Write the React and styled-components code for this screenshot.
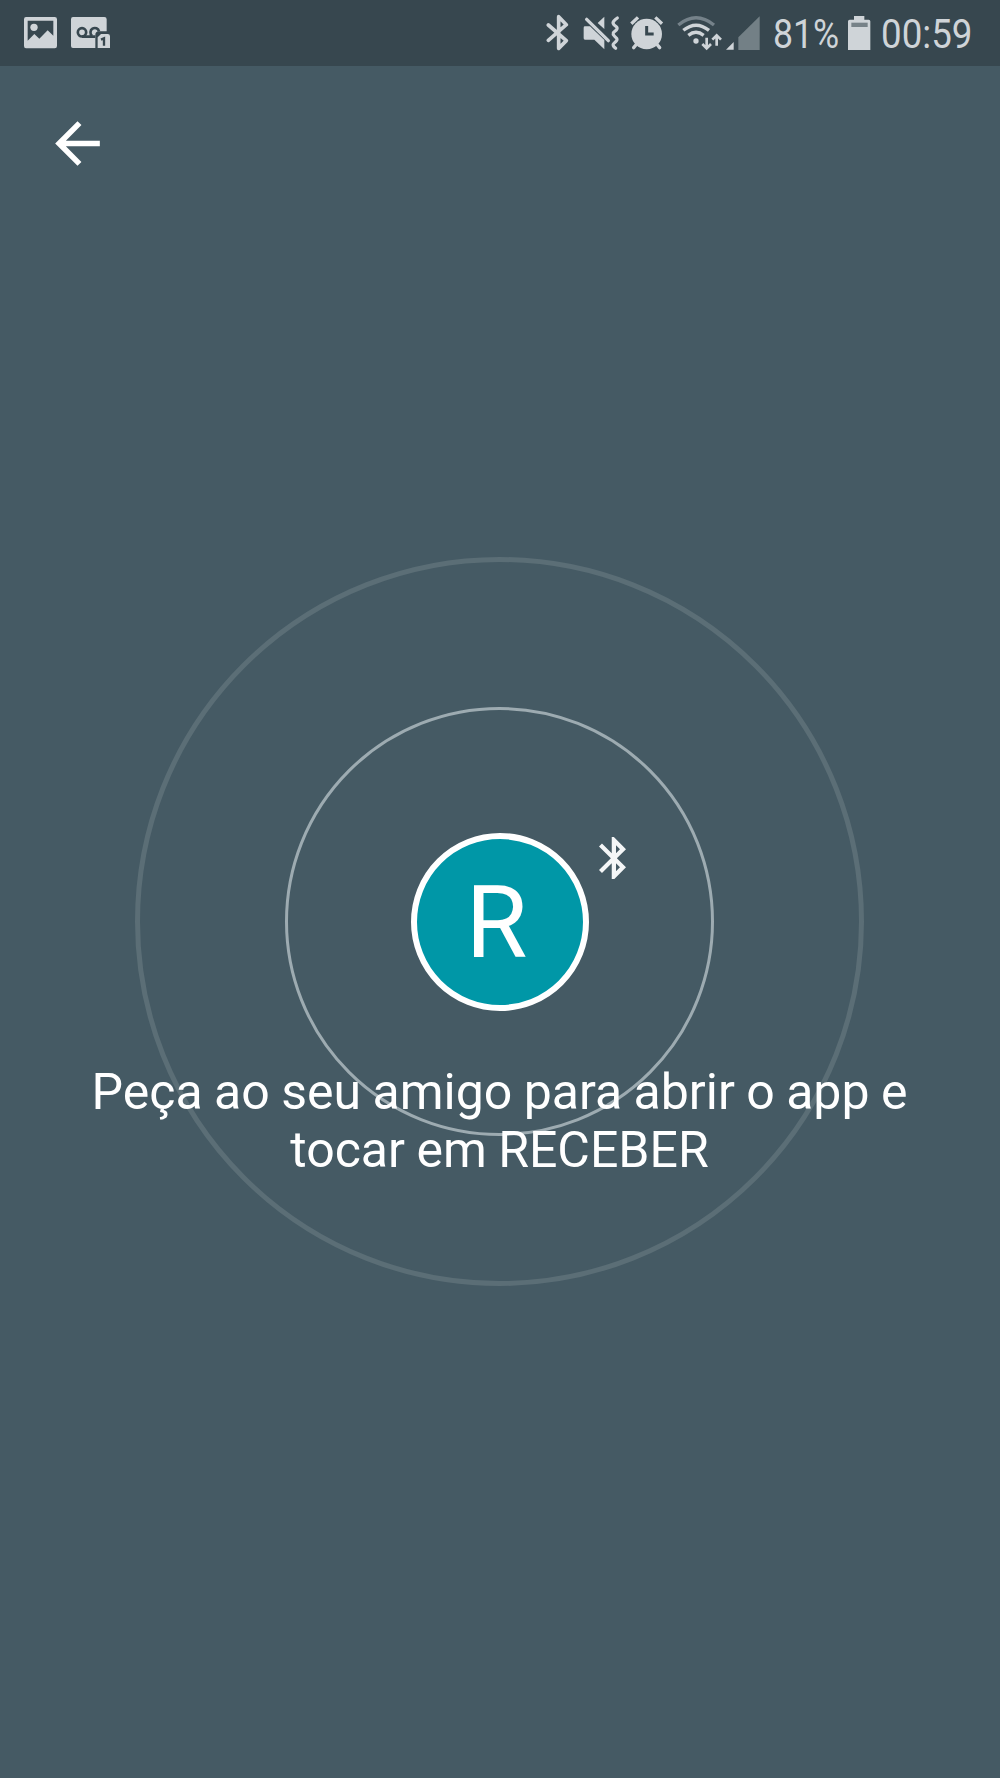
import React from "react";
import styled, { createGlobalStyle } from "styled-components";

const GlobalStyle = createGlobalStyle`
  * { box-sizing: border-box; }
  body { margin: 0; background: #455a64; }
`;

const Screen = styled.div`
  display: flex;
  flex-direction: column;
  width: 1000px;
  height: 1778px;
  overflow: hidden;
  background: #455a64;
  color: #fff;
  font-family: Roboto, "Liberation Sans", sans-serif;
`;

const StatusBar = styled.header`
  display: flex;
  justify-content: space-between;
  height: 66px;
  padding: 0 29px 0 24px;
  background: #37474f;
  color: #cfd4d8;
`;

const StatusGroup = styled.div`
  display: flex;
  align-items: flex-start;
`;

const Glyph = styled.svg`
  display: block;
  flex: none;
  width: ${(p) => p.$w}px;
  height: 66px;
  margin-left: ${(p) => p.$before || 0}px;
`;

const StatusText = styled.div`
  flex: none;
  width: ${(p) => p.$w}px;
  margin-left: ${(p) => p.$before || 0}px;
  padding-top: 10px;
  font-size: 41.5px;
  line-height: 48px;
  white-space: nowrap;
`;

const Condensed = styled.span`
  display: inline-block;
  transform: scaleX(${(p) => p.$scale});
  transform-origin: left center;
`;

const AppBar = styled.nav`
  flex: none;
  height: 156px;
  padding: 44px 0 0 44px;
`;

const BackButton = styled.button`
  display: block;
  padding: 0;
  border: 0;
  background: none;
  color: #fff;
`;

const Stage = styled.main`
  display: grid;
  justify-content: center;
  align-content: start;
  padding: 335px 1px 0 0;
`;

const Ring = styled.div`
  grid-area: 1 / 1;
  place-self: center;
  width: ${(p) => p.$size}px;
  height: ${(p) => p.$size}px;
  border: ${(p) => p.$line}px solid ${(p) => p.$color};
  border-radius: 50%;
`;

const Avatar = styled.div`
  grid-area: 1 / 1;
  place-self: center;
  display: flex;
  align-items: center;
  justify-content: center;
  width: 178px;
  height: 178px;
  padding: 2px 6px 0 0;
  border: 6px solid #fff;
  border-radius: 50%;
  background: #0097a7;
  font-size: 100px;
  line-height: 1;
`;

const BluetoothMark = styled.svg`
  grid-area: 1 / 1;
  place-self: start;
  width: 27px;
  height: 42.5px;
  margin: 279.7px 0 0 464px;
`;

const Message = styled.p`
  grid-area: 1 / 1;
  place-self: start center;
  width: 830px;
  margin: 506px -50px 0;
  font-size: 50px;
  line-height: 58px;
  word-spacing: -1px;
  text-align: center;
`;

const StatusIcon = ({ x, w, before, children }) => (
  <Glyph $w={w} $before={before} viewBox={`${x} 0 ${w * 3} 198`} fill="none" stroke="currentColor" aria-hidden="true">
    {children}
  </Glyph>
);

const PictureIcon = () => (
  <StatusIcon x={72} w={33}>
    <path fill="currentColor" stroke="none" fillRule="evenodd" d="M78 51H164Q171 51 171 58V138Q171 145 164 145H78Q72 145 72 138V58Q72 51 78 51ZM83 62V122L103 102L118 116L143 91L160 107V62Z" />
    <circle cx="102" cy="82" r="11" fill="currentColor" stroke="none" />
  </StatusIcon>
);

const VoicemailIcon = () => (
  <StatusIcon x={213} w={40} before={14}>
    <path fill="currentColor" stroke="none" d="M219 51H313Q320 51 320 58V94H297Q286 94 286 105V144H219Q213 144 213 138V58Q213 51 219 51Z" />
    <g stroke="#37474f" strokeWidth="8">
      <circle cx="246" cy="97" r="12.5" />
      <path d="M286 110H246M276 107A13 13 0 1 1 297 94" />
    </g>
    <path fill="currentColor" stroke="none" d="M303 102H323Q330 102 330 109V144H293V112Z" />
    <path stroke="#37474f" strokeWidth="7" d="M303 119L312 115V137" />
  </StatusIcon>
);

const BluetoothIcon = () => (
  <StatusIcon x={48} w={24}>
    <path strokeWidth="11" strokeLinecap="round" strokeLinejoin="round" d="M55 75L109 122L86 145V50L109 74L55 121" />
  </StatusIcon>
);

const MutedIcon = () => (
  <StatusIcon x={160} w={37} before={13}>
    <path fill="currentColor" stroke="none" d="M166 79H181L224 120V148L194 119H166Q162 119 162 115V83Q162 79 166 79ZM204 69L224 50V87Z" />
    <path strokeWidth="10" strokeLinecap="round" d="M171 58L236 122" />
    <path strokeWidth="9.5" strokeLinecap="round" strokeLinejoin="round" d="M263 54Q251 62 250 68Q250 73 261 81Q264 85 260 90L251 98Q249 103 254 108L261 115Q264 120 258 125L251 132Q248 137 258 145" />
  </StatusIcon>
);

const AlarmIcon = () => (
  <StatusIcon x={300} w={34} before={10}>
    <circle cx="350" cy="102" r="46" fill="currentColor" stroke="none" />
    <path strokeWidth="10" d="M304 71L324 52M376 52L396 71" />
    <path strokeWidth="10" strokeLinecap="round" d="M320 132L311 143M380 132L389 143" />
    <path stroke="#37474f" strokeWidth="9" d="M350 78V102H371" />
  </StatusIcon>
);

const WifiIcon = () => (
  <StatusIcon x={439} w={46} before={12.3}>
    <path stroke="#75828a" strokeWidth="10" d="M443 75Q496 32 550 75" />
    <path strokeWidth="10" d="M458 91Q496 60 535 91M473 106Q496 88 519 106" />
    <circle cx="496" cy="123" r="8" fill="currentColor" stroke="none" />
    <path strokeWidth="8" d="M528 113V144M515 132L528 145L541 132M558 137V107M545 119L558 106L571 119" />
  </StatusIcon>
);

const SignalIcon = () => (
  <StatusIcon x={589} w={34} before={3.5}>
    <path fill="currentColor" stroke="none" d="M589 149L612 126V149Z" />
    <path fill="#738086" stroke="none" d="M690 49V150H626V112Z" />
  </StatusIcon>
);

const BatteryIcon = () => (
  <StatusIcon x={263} w={23} before={9.5}>
    <path fill="currentColor" stroke="none" d="M281 48H312V59H325Q330 59 330 64V150H263V64Q263 59 268 59H281Z" />
    <path fill="#778288" stroke="none" d="M273 68H322V81H273Z" />
  </StatusIcon>
);

export default function App() {
  return (
    <Screen>
      <GlobalStyle />
      <StatusBar>
        <StatusGroup>
          <PictureIcon />
          <VoicemailIcon />
        </StatusGroup>
        <StatusGroup>
          <BluetoothIcon />
          <MutedIcon />
          <AlarmIcon />
          <WifiIcon />
          <SignalIcon />
          <StatusText $w={65.5} $before={12.5}>
            <Condensed $scale={0.86}>81%</Condensed>
          </StatusText>
          <BatteryIcon />
          <StatusText $w={90} $before={10.5}>
            <Condensed $scale={0.885}>00:59</Condensed>
          </StatusText>
        </StatusGroup>
      </StatusBar>
      <AppBar>
        <BackButton aria-label="Voltar">
          <svg width="67" height="67" viewBox="0 0 24 24" fill="currentColor" display="block">
            <path d="M20 11H7.83l5.59-5.59L12 4l-8 8 8 8 1.41-1.41L7.83 13H20v-2z" />
          </svg>
        </BackButton>
      </AppBar>
      <Stage>
        <Ring $size={729} $line={5} $color="#5b6e76" />
        <Ring $size={429} $line={3} $color="#9dabb1" />
        <Avatar>R</Avatar>
        <BluetoothMark viewBox="5 2 12.71 20" fill="#f4f6f7">
          <path
            fillRule="evenodd"
            d="M17.71 7.71L12 2h-1v7.59L6.41 5 5 6.41 10.59 12 5 17.59 6.41 19 11 14.41V22h1l5.71-5.71-4.3-4.29 4.3-4.29zM13 5.83l1.88 1.88L13 9.59V5.83zm1.88 10.46L13 18.17v-3.76l1.88 1.88z"
          />
        </BluetoothMark>
        <Message>
          Peça ao seu amigo para abrir o app e tocar em RECEBER
        </Message>
      </Stage>
    </Screen>
  );
}
